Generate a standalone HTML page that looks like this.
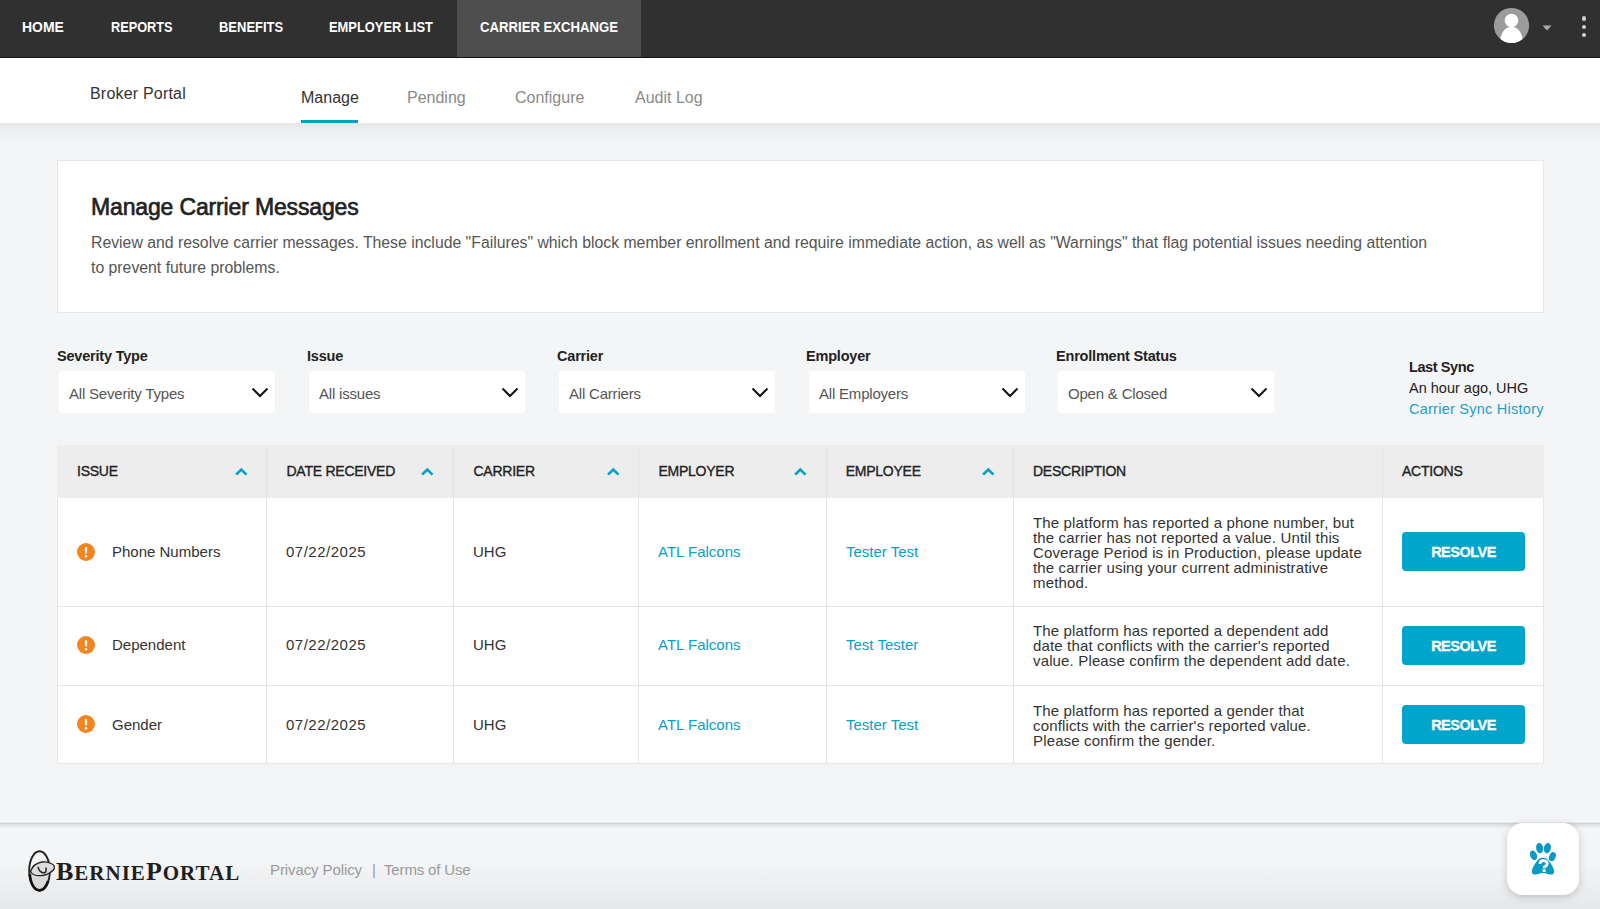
<!DOCTYPE html>
<html><head><meta charset="utf-8">
<style>
*{box-sizing:border-box;margin:0;padding:0}
html,body{width:1600px;height:909px;overflow:hidden}
body{font-family:"Liberation Sans",sans-serif;background:#f4f5f7;position:relative;color:#222}
.abs{position:absolute}
#nav{left:0;top:0;width:1600px;height:58px;background:#303030;border-bottom:1px solid #111}
#nav .it{position:absolute;top:0;height:57px;line-height:54px;color:#fff;font-weight:bold;font-size:14.5px;white-space:nowrap}
#nav .act{background:#4e4e4e}
#sub{left:0;top:58px;width:1600px;height:64.5px;background:#fff}
#subsh{left:0;top:122.5px;width:1600px;height:18px;background:linear-gradient(#e6e7e9,#f4f5f7)}
.tab{position:absolute;font-size:16px;color:#8a8a8a;white-space:nowrap}
#card{left:57px;top:160px;width:1487px;height:153px;background:#fff;border:1px solid #e6e7e8}
.lbl{position:absolute;margin-top:1px;font-size:14.5px;font-weight:bold;color:#222;white-space:nowrap;letter-spacing:-0.2px}
.sel{position:absolute;top:371px;height:42px;background:#fff;border-radius:3px;font-size:15px;color:#555;white-space:nowrap}
.sel span{position:absolute;left:10px;top:14px;letter-spacing:-0.2px}
.sel svg{position:absolute;right:6px;top:16px}
#tbl{left:57px;top:445px;width:1487px;height:319px;background:#fff;border:1px solid #e6e6e6}
.th{position:absolute;top:445px;height:53px;line-height:53px;font-size:14px;font-weight:normal;-webkit-text-stroke:0.35px #222;color:#222;white-space:nowrap;letter-spacing:-0.25px}
.td{position:absolute;display:flex;align-items:center;font-size:15px;color:#333;white-space:nowrap;padding-bottom:2px}
.td.lk{color:#08a0c9}
.td.desc{font-size:15px;line-height:15px;color:#333;letter-spacing:0.15px;padding-bottom:0}
.btn{position:absolute;width:123px;height:39px;background:#00a5cb;border-radius:4px;color:#fff;font-weight:bold;font-size:14.5px;text-align:center;line-height:40px;letter-spacing:-0.5px;-webkit-text-stroke:0.3px #fff}
</style></head><body>
<div id="nav" class="abs">
  <div class="it" style="left:22px"><span style="display:inline-block;transform:scaleX(0.963);transform-origin:0 0">HOME</span></div>
  <div class="it" style="left:111.25px"><span style="display:inline-block;transform:scaleX(0.878);transform-origin:0 0">REPORTS</span></div>
  <div class="it" style="left:219px"><span style="display:inline-block;transform:scaleX(0.895);transform-origin:0 0">BENEFITS</span></div>
  <div class="it" style="left:329px"><span style="display:inline-block;transform:scaleX(0.889);transform-origin:0 0">EMPLOYER LIST</span></div>
  <div class="it act" style="left:457px;width:184px;padding-left:23px"><span style="display:inline-block;transform:scaleX(0.907);transform-origin:0 0">CARRIER EXCHANGE</span></div>

<svg class="abs" style="left:1493px;top:7px" width="37" height="37" viewBox="0 0 37 37">
  <defs><clipPath id="cc"><circle cx="18.5" cy="18.5" r="17.5"/></clipPath></defs>
  <circle cx="18.5" cy="18.5" r="17.6" fill="#9b9b9b"/>
  <g clip-path="url(#cc)"><circle cx="18.5" cy="13.5" r="6.8" fill="#fff"/><ellipse cx="18.5" cy="34" rx="11.2" ry="14.2" fill="#fff"/></g>
</svg>
<svg class="abs" style="left:1541.5px;top:24.5px" width="10" height="6" viewBox="0 0 10 6"><path d="M0.5 0.5 L9.5 0.5 L5 5.5Z" fill="#aaa"/></svg>
<div class="abs" style="left:1581.8px;top:16.2px;width:4.4px;height:4.4px;border-radius:50%;background:#d0d0d0"></div>
<div class="abs" style="left:1581.8px;top:24.6px;width:4.4px;height:4.4px;border-radius:50%;background:#d0d0d0"></div>
<div class="abs" style="left:1581.8px;top:32.6px;width:4.4px;height:4.4px;border-radius:50%;background:#d0d0d0"></div>
</div>
<div id="sub" class="abs">
  <div class="tab" style="left:90px;top:26.5px;color:#333;letter-spacing:0.2px">Broker Portal</div>
  <div class="tab" style="left:301px;top:31px;color:#333">Manage</div>
  <div class="abs" style="left:301px;top:62px;width:57px;height:2.5px;background:#0a9dc6"></div>
  <div class="tab" style="left:407px;top:31px">Pending</div>
  <div class="tab" style="left:515px;top:31px">Configure</div>
  <div class="tab" style="left:635px;top:31px">Audit Log</div>
</div>
<div id="subsh" class="abs"></div>
<div id="card" class="abs">
  <div class="abs" style="left:33px;top:33px;font-size:23px;font-weight:normal;-webkit-text-stroke:0.65px #222;color:#222;white-space:nowrap;letter-spacing:-0.15px">Manage Carrier Messages</div>
  <div class="abs" style="left:33px;top:69px;font-size:15.8px;line-height:25px;color:#555;white-space:nowrap">Review and resolve carrier messages. These include "Failures" which block member enrollment and require immediate action, as well as "Warnings" that flag potential issues needing attention<br>to prevent future problems.</div>
</div>
<div class="lbl" style="left:57px;top:347px">Severity Type</div>
<div class="lbl" style="left:307px;top:347px">Issue</div>
<div class="lbl" style="left:557px;top:347px">Carrier</div>
<div class="lbl" style="left:806px;top:347px">Employer</div>
<div class="lbl" style="left:1056px;top:347px">Enrollment Status</div>
<div class="sel" style="left:59px;width:216px"><span>All Severity Types</span><svg width="18" height="11" viewBox="0 0 18 11"><path d="M1.5 1.5 L9 9 L16.5 1.5" fill="none" stroke="#111" stroke-width="2"/></svg></div>
<div class="sel" style="left:309px;width:216px"><span>All issues</span><svg width="18" height="11" viewBox="0 0 18 11"><path d="M1.5 1.5 L9 9 L16.5 1.5" fill="none" stroke="#111" stroke-width="2"/></svg></div>
<div class="sel" style="left:559px;width:216px"><span>All Carriers</span><svg width="18" height="11" viewBox="0 0 18 11"><path d="M1.5 1.5 L9 9 L16.5 1.5" fill="none" stroke="#111" stroke-width="2"/></svg></div>
<div class="sel" style="left:809px;width:216px"><span>All Employers</span><svg width="18" height="11" viewBox="0 0 18 11"><path d="M1.5 1.5 L9 9 L16.5 1.5" fill="none" stroke="#111" stroke-width="2"/></svg></div>
<div class="sel" style="left:1058px;width:216px"><span>Open &amp; Closed</span><svg width="18" height="11" viewBox="0 0 18 11"><path d="M1.5 1.5 L9 9 L16.5 1.5" fill="none" stroke="#111" stroke-width="2"/></svg></div>
<div class="abs" style="left:1409px;top:357px;font-size:14.5px;line-height:21px;color:#222;white-space:nowrap"><b style="letter-spacing:-0.4px">Last Sync</b><br>An hour ago, UHG<br><span style="color:#1a9fc9;letter-spacing:0.25px">Carrier Sync History</span></div>
<div id="tbl" class="abs"></div>
<div id="tblwrap">
<div class="abs" style="left:57px;top:445px;width:1487px;height:53px;background:#ededed"></div>
<div class="abs" style="left:266px;top:445px;width:1px;height:319px;background:#e4e5e6"></div>
<div class="abs" style="left:453px;top:445px;width:1px;height:319px;background:#e4e5e6"></div>
<div class="abs" style="left:638px;top:445px;width:1px;height:319px;background:#e4e5e6"></div>
<div class="abs" style="left:826px;top:445px;width:1px;height:319px;background:#e4e5e6"></div>
<div class="abs" style="left:1013px;top:445px;width:1px;height:319px;background:#e4e5e6"></div>
<div class="abs" style="left:1382px;top:445px;width:1px;height:319px;background:#e4e5e6"></div>
<div class="abs" style="left:57px;top:606px;width:1487px;height:1px;background:#e4e5e6"></div>
<div class="abs" style="left:57px;top:685px;width:1487px;height:1px;background:#e4e5e6"></div>
<div class="th" style="left:77px">ISSUE</div>
<div class="th" style="left:286.5px">DATE RECEIVED</div>
<div class="th" style="left:473.5px">CARRIER</div>
<div class="th" style="left:658.5px">EMPLOYER</div>
<div class="th" style="left:845.75px">EMPLOYEE</div>
<div class="th" style="left:1033px">DESCRIPTION</div>
<div class="th" style="left:1402px">ACTIONS</div>
<svg class="abs" style="left:235px;top:467px" width="13" height="9" viewBox="0 0 13 9"><path d="M1.1 7.6 L6.3 2.6 L11.5 7.6" fill="none" stroke="#04a2c9" stroke-width="2.7"/></svg>
<svg class="abs" style="left:421px;top:467px" width="13" height="9" viewBox="0 0 13 9"><path d="M1.1 7.6 L6.3 2.6 L11.5 7.6" fill="none" stroke="#04a2c9" stroke-width="2.7"/></svg>
<svg class="abs" style="left:607px;top:467px" width="13" height="9" viewBox="0 0 13 9"><path d="M1.1 7.6 L6.3 2.6 L11.5 7.6" fill="none" stroke="#04a2c9" stroke-width="2.7"/></svg>
<svg class="abs" style="left:794px;top:467px" width="13" height="9" viewBox="0 0 13 9"><path d="M1.1 7.6 L6.3 2.6 L11.5 7.6" fill="none" stroke="#04a2c9" stroke-width="2.7"/></svg>
<svg class="abs" style="left:982px;top:467px" width="13" height="9" viewBox="0 0 13 9"><path d="M1.1 7.6 L6.3 2.6 L11.5 7.6" fill="none" stroke="#04a2c9" stroke-width="2.7"/></svg>
<div class="abs warn" style="left:77px;top:543px"><svg width="18" height="18" viewBox="0 0 18 18"><circle cx="9" cy="9" r="9" fill="#f5841f"/><rect x="7.9" y="4" width="2.2" height="6.5" rx="1" fill="#fff"/><circle cx="9" cy="13.2" r="1.2" fill="#fff"/></svg></div>
<div class="td" style="left:112px;top:498px;height:108px">Phone Numbers</div>
<div class="td" style="left:286px;top:498px;height:108px;letter-spacing:0.5px">07/22/2025</div>
<div class="td" style="left:473px;top:498px;height:108px">UHG</div>
<div class="td lk" style="left:658px;top:498px;height:108px">ATL Falcons</div>
<div class="td lk" style="left:846px;top:498px;height:108px">Tester Test</div>
<div class="td desc" style="left:1033px;top:498px;height:108px"><div>The platform has reported a phone number, but<br>the carrier has not reported a value. Until this<br>Coverage Period is in Production, please update<br>the carrier using your current administrative<br>method.</div></div>
<div class="btn" style="left:1402px;top:532px">RESOLVE</div>
<div class="abs warn" style="left:77px;top:636px"><svg width="18" height="18" viewBox="0 0 18 18"><circle cx="9" cy="9" r="9" fill="#f5841f"/><rect x="7.9" y="4" width="2.2" height="6.5" rx="1" fill="#fff"/><circle cx="9" cy="13.2" r="1.2" fill="#fff"/></svg></div>
<div class="td" style="left:112px;top:606px;height:79px">Dependent</div>
<div class="td" style="left:286px;top:606px;height:79px;letter-spacing:0.5px">07/22/2025</div>
<div class="td" style="left:473px;top:606px;height:79px">UHG</div>
<div class="td lk" style="left:658px;top:606px;height:79px">ATL Falcons</div>
<div class="td lk" style="left:846px;top:606px;height:79px">Test Tester</div>
<div class="td desc" style="left:1033px;top:606px;height:79px"><div>The platform has reported a dependent add<br>date that conflicts with the carrier's reported<br>value. Please confirm the dependent add date.</div></div>
<div class="btn" style="left:1402px;top:626px">RESOLVE</div>
<div class="abs warn" style="left:77px;top:715px"><svg width="18" height="18" viewBox="0 0 18 18"><circle cx="9" cy="9" r="9" fill="#f5841f"/><rect x="7.9" y="4" width="2.2" height="6.5" rx="1" fill="#fff"/><circle cx="9" cy="13.2" r="1.2" fill="#fff"/></svg></div>
<div class="td" style="left:112px;top:686px;height:78px">Gender</div>
<div class="td" style="left:286px;top:686px;height:78px;letter-spacing:0.5px">07/22/2025</div>
<div class="td" style="left:473px;top:686px;height:78px">UHG</div>
<div class="td lk" style="left:658px;top:686px;height:78px">ATL Falcons</div>
<div class="td lk" style="left:846px;top:686px;height:78px">Tester Test</div>
<div class="td desc" style="left:1033px;top:686px;height:78px"><div>The platform has reported a gender that<br>conflicts with the carrier's reported value.<br>Please confirm the gender.</div></div>
<div class="btn" style="left:1402px;top:705px">RESOLVE</div>
</div>

<div class="abs" style="left:0;top:822px;width:1600px;height:87px;background:linear-gradient(#f4f5f7 0,#f4f5f7 40px,#e6e7e9 87px)"></div>
<div class="abs" style="left:0;top:821px;width:1600px;height:1px;background:#f9fafb"></div><div class="abs" style="left:0;top:822px;width:1600px;height:1px;background:#e6e7e9"></div><div class="abs" style="left:0;top:823px;width:1600px;height:1px;background:#d2d3d5"></div><div class="abs" style="left:0;top:824px;width:1600px;height:4px;background:linear-gradient(#dadbdd,#f1f2f4)"></div>
<svg class="abs" style="left:24px;top:846px" width="34" height="50" viewBox="0 0 34 50">
  <path d="M6.5 29 C7.5 37 10.5 43 15.5 43.8 C20.5 43 23.5 37 24.6 28 C19 30 12 30.5 6.5 29Z" fill="#d9d9d9"/>
  <ellipse cx="15.5" cy="24.9" rx="10.3" ry="19.6" fill="none" stroke="#222" stroke-width="1.9"/>
  <path d="M5.8 28 C6.5 38 10.5 44.2 15.5 44.4 C19.5 44.3 22.5 40 24.2 35" fill="none" stroke="#111" stroke-width="2.6"/>
  <path d="M6.5 25.5 C8 21 12 17 18 16 C22 15.5 25 16 27 17.5 C29.5 18.5 30.8 20.5 30.3 22.5 C29.8 24.5 27.8 25.5 25.5 27 C22 29.5 15 30.5 10.5 29 C8.5 28.3 7.2 27 6.5 25.5Z" fill="#dcdcdc" stroke="#222" stroke-width="1.3"/>
  <path d="M14 20.8 C15 25 17.5 27 20.5 26.8 C21.8 26.7 22.3 25 22 21.5" fill="none" stroke="#222" stroke-width="1.5"/>
</svg>
<div id="logo" class="abs" style="left:56px;top:856.5px;font-family:'Liberation Serif',serif;font-weight:bold;font-size:26px;line-height:30px;color:#1e1e1e;white-space:nowrap;letter-spacing:1px">B<span style="font-size:21px">ERNIE</span>P<span style="font-size:21px">ORTAL</span></div>
<div class="abs" style="left:270px;top:861px;font-size:15px;color:#9a9a9a;white-space:nowrap;letter-spacing:-0.1px">Privacy Policy</div><div class="abs" style="left:372px;top:861px;font-size:15px;color:#9a9a9a">|</div><div class="abs" style="left:384px;top:861px;font-size:15px;color:#9a9a9a;white-space:nowrap;letter-spacing:-0.15px">Terms of Use</div>
<div class="abs" style="left:1507px;top:823px;width:72px;height:72px;background:#fff;border-radius:16px;box-shadow:0 2px 8px rgba(0,0,0,0.18)">
<svg class="abs" style="left:22px;top:19px" width="28" height="34" viewBox="0 0 28 34">
  <ellipse cx="10.6" cy="6.1" rx="3.5" ry="5.2" fill="#0b9ac6" transform="rotate(-8 10.6 6.1)"/>
  <ellipse cx="18.4" cy="6.1" rx="3.5" ry="5.2" fill="#0b9ac6" transform="rotate(12 18.4 6.1)"/>
  <ellipse cx="4.5" cy="13.3" rx="3.3" ry="5" fill="#0b9ac6" transform="rotate(-22 4.5 13.3)"/>
  <ellipse cx="23.4" cy="14.6" rx="3.2" ry="4.8" fill="#0b9ac6" transform="rotate(22 23.4 14.6)"/>
  <path d="M14 15.8 C10.5 15.8 8 18.5 5.6 22.5 C3.6 25.5 2.7 28 2.8 30 C3 32.6 5.5 33 8 32.3 C10 31.6 12 30.9 14 30.9 C16 30.9 18 31.6 20 32.3 C22.5 33 25 32.6 25.2 30 C25.3 28 24.4 25.5 22.4 22.5 C20 18.5 17.5 15.8 14 15.8Z" fill="#0b9ac6"/>
  <path d="M10.9 22 C10.9 19.8 12.5 18.6 14.6 18.6 C16.9 18.6 18.3 19.9 18.3 21.8 C18.3 23.7 16.4 24.2 15.2 25.1 L15.2 26.3" fill="none" stroke="#fff" stroke-width="2.7"/><rect x="13.7" y="27.3" width="2.9" height="2.7" fill="#fff"/>
</svg>
</div>
</body></html>
